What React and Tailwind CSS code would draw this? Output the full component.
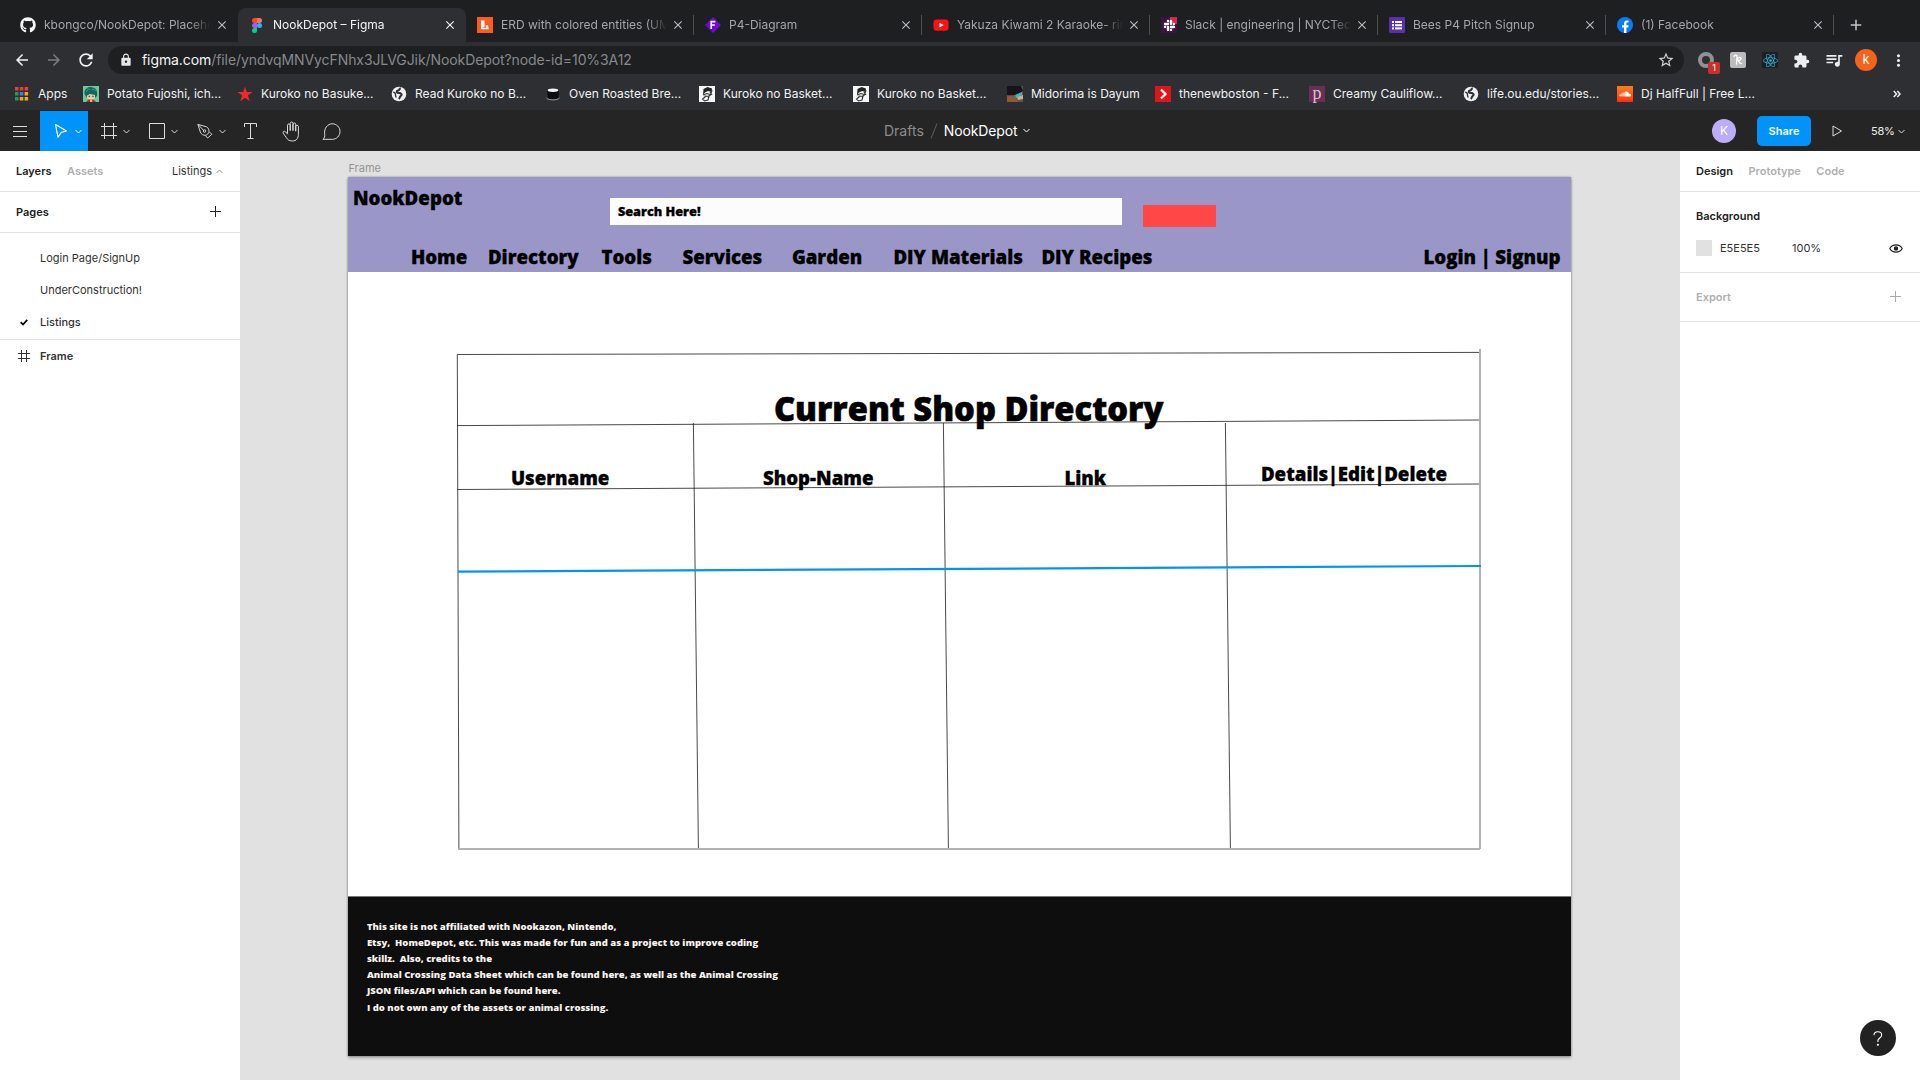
import React from "react";
import {
  MdArrowBack, MdArrowForward, MdRefresh, MdLock, MdStarBorder, MdExtension,
  MdQueueMusic, MdMoreVert, MdClose, MdAdd,
} from "react-icons/md";
import { FaGithub, FaReact, FaSoundcloud, FaSlack } from "react-icons/fa";

/* ---------- favicons ---------- */

const FigmaLogo = () => (
  <svg width="10" height="15" viewBox="0 0 10 15">
    <path d="M2.5 0H5v5H2.5a2.5 2.5 0 0 1 0-5z" fill="#f24e1e" />
    <path d="M5 0h2.5a2.5 2.5 0 0 1 0 5H5z" fill="#ff7262" />
    <path d="M2.5 5H5v5H2.5a2.5 2.5 0 0 1 0-5z" fill="#a259ff" />
    <circle cx="7.5" cy="7.5" r="2.5" fill="#1abcfe" />
    <path d="M2.5 10H5v2.5A2.5 2.5 0 1 1 2.5 10z" fill="#0acf83" />
  </svg>
);
const LucidLogo = () => (
  <svg width="16" height="16" viewBox="0 0 16 16">
    <rect width="16" height="16" fill="#fc5c1d" />
    <path d="M4 3.5h3.6v5.3l3.4-.5.8 3.9H4z" fill="#fff" />
    <path d="M5.4 10.8l3.2-2 .8 1.9z" fill="#fc5c1d" />
  </svg>
);
const DiamondLogo = () => (
  <svg width="16" height="16" viewBox="0 0 16 16">
    <path d="M8 0l8 8-8 8-8-8z" fill="#7109d6" />
    <path d="M6.2 12V4.6h4.2M6.2 8h3.6" fill="none" stroke="#fff" strokeWidth="1.6" />
  </svg>
);
const YoutubeLogo = () => (
  <svg width="16" height="16" viewBox="0 0 16 16">
    <rect x="0.5" y="2.5" width="15" height="11.3" rx="3" fill="#f11" />
    <path d="M6.5 5.7l4.2 2.4-4.2 2.4z" fill="#fff" />
  </svg>
);
const SlackTile = () => (
  <div className="relative flex size-4 items-center justify-center bg-[#3f1144]">
    <span className="absolute right-0 top-0 h-[7px] w-[7px] bg-[#d8264f]" />
    <FaSlack className="relative size-[13px] text-white" />
  </div>
);
const FormsLogo = () => (
  <svg width="16" height="16" viewBox="0 0 16 16">
    <rect width="16" height="16" rx="1.2" fill="#5b2fb0" />
    <g fill="#fff">
      <rect x="3" y="4" width="2" height="2" /><rect x="6" y="4" width="7" height="2" />
      <rect x="3" y="7.2" width="2" height="2" /><rect x="6" y="7.2" width="7" height="2" />
      <rect x="3" y="10.4" width="2" height="2" /><rect x="6" y="10.4" width="7" height="2" />
    </g>
  </svg>
);
const FacebookLogo = () => (
  <svg width="16" height="16" viewBox="0 0 16 16">
    <circle cx="8" cy="8" r="8" fill="#0a7cf5" />
    <path d="M7 16v-5.4H5V8.2h2V6.5c0-2 1.2-3.1 3-3.1.8 0 1.5.1 1.5.1v2h-.9c-1 0-1.2.6-1.2 1.2v1.5h2.2l-.4 2.4H9.4V16z" fill="#fff" />
  </svg>
);
const AppsGrid = () => (
  <svg width="16" height="16" viewBox="0 0 16 16">
    <g fill="#ea3f35"><rect x="1" y="1" width="3.500" height="3.500" /><rect x="5.800" y="1" width="3.500" height="3.500" /><rect x="10.600" y="1" width="3.500" height="3.500" /></g>
    <rect x="1" y="6" width="3.500" height="3.500" fill="#1f9d55" /><rect x="5.800" y="6" width="3.500" height="3.500" fill="#3b7fe8" /><rect x="10.600" y="6" width="3.500" height="3.500" fill="#f6a623" />
    <rect x="1" y="11" width="3.500" height="3.500" fill="#1f9d55" /><rect x="5.800" y="11" width="3.500" height="3.500" fill="#f6a623" /><rect x="10.600" y="11" width="3.500" height="3.500" fill="#f6a623" />
  </svg>
);
const AnimeFace = () => (
  <svg width="16" height="16" viewBox="0 0 16 16">
    <rect width="16" height="16" fill="#6fc79b" />
    <path d="M1.5 8C1 3 5 .5 8.500 1.200 13 1.500 15 5 14 10l-2 2H4z" fill="#14665f" />
    <path d="M3 2.500l4 1M9 3l4 1.500M3 6l2-2" stroke="#2f9a8b" />
    <path d="M4 9.500l3-1.500 5 1V12l-2 2H6l-2-2z" fill="#ecc8a8" />
    <path d="M5.500 10.300h1.600M9.200 10.300h1.600" stroke="#2c4034" />
    <path d="M3 16l2.500-2.600h5L13 16z" fill="#8a3a26" />
    <path d="M7 13.400h2.200V16H7z" fill="#e6b593" />
  </svg>
);
const RedStar = () => (
  <svg width="16" height="16" viewBox="0 0 16 16">
    <path d="M8 .8l1.800 5.300h5.700l-4.600 3.400 1.900 5.800L8 11.800l-4.800 3.500 1.900-5.800L.5 6.100h5.700z" fill="#f0282d" />
  </svg>
);
const Globe = () => (
  <svg width="16" height="16" viewBox="0 0 16 16">
    <circle cx="8" cy="8" r="7.3" fill="#eef0f2" />
    <path d="M9.800 2.200c-1.600.2-1 1.600-2.300 2-1.300.3-2 1-1.500 2.100.5 1 2.500.6 3.500 1 1.300.6 1.500 1.700.3 2.600-1 .7-1 2.200-2 3.100" fill="none" stroke="#2e2f33" strokeWidth="2" />
    <path d="M2.200 6.200c1 .3 2.600 1.300 2.300 2.600-.2 1 .6 1.400.5 2.800" fill="none" stroke="#2e2f33" strokeWidth="1.300" />
  </svg>
);
const Pot = () => (
  <svg width="16" height="16" viewBox="0 0 16 16">
    <path d="M2 4.500h12l-.7 7.500c-.2 2-10.400 2-10.600 0z" fill="#0d0d0f" />
    <ellipse cx="8" cy="4.300" rx="5.300" ry="1.700" fill="#f5f5f5" />
    <path d="M1.500 12c2 2.500 11 2.500 13 0" fill="none" stroke="#b9b9bc" strokeWidth=".8" />
  </svg>
);
const Manga = () => (
  <svg width="16" height="16" viewBox="0 0 16 16">
    <rect width="16" height="16" fill="#f6f6f6" />
    <path d="M4.500 3l4-2 4.500 1.500L12.500 6 9 5 6 6.500 4 9z" fill="#222" />
    <path d="M13 4l-1.500 5-3 2M4 9l4-1.500 3 1M6 11l-2.500 2 2 2 3.500-1 1-3.500-4-.5zM11 6l2 3" fill="none" stroke="#333" strokeWidth="1.100" />
  </svg>
);
const Midorima = () => (
  <svg width="16" height="16" viewBox="0 0 16 16">
    <rect width="16" height="16" fill="#5c5350" />
    <path d="M0 0h14l2 5-7 5-9-1z" fill="#121519" />
    <path d="M0 10l8-1 3 7H0z" fill="#8f5a3c" />
    <path d="M8 9l7-3v3l-6 3z" fill="#38b6c4" />
    <path d="M10 11l6-2v4l-5 1z" fill="#cbb37a" />
  </svg>
);
const RedChevron = () => (
  <svg width="16" height="16" viewBox="0 0 16 16">
    <rect width="16" height="16" fill="#e0141b" />
    <path d="M6 3.500l4.500 4.500L6 12.500" fill="none" stroke="#fff" strokeWidth="2.200" />
  </svg>
);
const PinchTile = () => (
  <div className="flex size-4 items-center justify-center bg-[#6b2f57] pb-[3px] font-['Liberation_Serif',serif] text-[18px] leading-none text-[#d9c5d2]">p</div>
);
const CloudTile = () => (
  <div className="flex size-4 items-center justify-center bg-linear-to-b from-[#ff7a18] to-[#ff2a10]">
    <FaSoundcloud className="size-[12px] text-white" />
  </div>
);

/* ---------- browser chrome ---------- */

const tabs = [
  { title: "kbongco/NookDepot: Placeho", icon: <FaGithub className="size-4 text-[#f5f5f5]" />, first: true },
  { title: "NookDepot – Figma", icon: <FigmaLogo />, active: true },
  { title: "ERD with colored entities (UM", icon: <LucidLogo />, sep: true },
  { title: "P4-Diagram", icon: <DiamondLogo />, sep: true },
  { title: "Yakuza Kiwami 2 Karaoke- rin", icon: <YoutubeLogo />, sep: true },
  { title: "Slack | engineering | NYCTec", icon: <SlackTile />, sep: true },
  { title: "Bees P4 Pitch Signup", icon: <FormsLogo />, sep: true },
  { title: "(1) Facebook", icon: <FacebookLogo />, sep: true },
];

function Tab({ title, icon, active, sep, first }) {
  return (
    <div
      className={
        "relative flex h-[34px] w-[228px] items-center " + (first ? "pl-[10px] " : "pl-[11px] ") +
        (active ? "rounded-t-lg bg-[#2e2f33] text-[#f2f3f4]" : "text-[#a3a6aa]")
      }
    >
      <div className="flex size-4 shrink-0 items-center justify-center">{icon}</div>
      <div className="ml-2 w-[168px] overflow-hidden whitespace-nowrap text-[12px] [mask-image:linear-gradient(to_right,black_87%,transparent_99%)]">
        {title}
      </div>
      <MdClose className={"size-[14px] " + (first ? "ml-[3px] " : "ml-[2px] ") + (active ? "text-[#f2f3f4]" : "text-[#b9bcc0]")} />
      {sep && <span className="absolute right-0 top-[7px] h-5 w-px bg-[#4b4d51]" />}
    </div>
  );
}

const bookmarks = [
  { w: "w-[69px]", t: "Apps", i: <AppsGrid /> },
  { w: "w-[154px]", t: "Potato Fujoshi, ich...", i: <AnimeFace /> },
  { w: "w-[154px]", t: "Kuroko no Basuke...", i: <RedStar /> },
  { w: "w-[154px]", t: "Read Kuroko no B...", i: <Globe /> },
  { w: "w-[154px]", t: "Oven Roasted Bre...", i: <Pot /> },
  { w: "w-[154px]", t: "Kuroko no Basket...", i: <Manga /> },
  { w: "w-[154px]", t: "Kuroko no Basket...", i: <Manga /> },
  { w: "w-[148px]", t: "Midorima is Dayum", i: <Midorima /> },
  { w: "w-[154px]", t: "thenewboston - F...", i: <RedChevron /> },
  { w: "w-[154px]", t: "Creamy Cauliflow...", i: <PinchTile /> },
  { w: "w-[154px]", t: "life.ou.edu/stories...", i: <Globe /> },
  { w: "w-[154px]", t: "Dj HalfFull | Free L...", i: <CloudTile /> },
];

function Browser() {
  return (
    <header>
      <div className="flex h-[42px] items-end bg-[#1e1f21] pl-[10px]">
        {tabs.map((t) => <Tab key={t.title} {...t} />)}
        <div className="flex h-[34px] items-center pl-[13px]">
          <MdAdd className="size-[18px] text-[#c3c6c9]" />
        </div>
      </div>
      <div className="flex h-9 items-center bg-[#2e2f33] pl-[13px]">
        <MdArrowBack className="size-[18px] text-[#f1f3f4]" />
        <MdArrowForward className="ml-[14px] size-[18px] text-[#7b7d81]" />
        <MdRefresh className="ml-[13px] size-[20px] text-[#f1f3f4]" />
        <div className="ml-[12px] flex h-7 w-[1576px] items-center rounded-full bg-[#1e1f21] pl-[11px] pr-[9px]">
          <MdLock className="size-[14px] text-[#e4e6e8]" />
          <div className="mb-[2px] ml-[9px] flex-1 whitespace-nowrap text-[14px] tracking-[-0.006em] text-[#87898d]">
            <span className="text-[#f5f6f7]">figma.com</span>/file/yndvqMNVycFNhx3JLVGJik/NookDepot?node-id=10%3A12
          </div>
          <MdStarBorder className="size-[18px] text-[#d0d2d5]" />
        </div>
        <div className="relative ml-[14px] size-4">
          <div className="size-4 rounded-full border-[4px] border-[#8f9194]" />
          <span className="absolute left-[10px] top-[10px] flex h-3 w-3 items-center justify-center rounded-[2px] bg-[#c9302c] text-[9px] text-white">1</span>
        </div>
        <div className="ml-4 flex size-4 items-center justify-center rounded-[2px] bg-[#bcbcbc]">
          <svg width="12" height="14" viewBox="0 0 12 14" fill="none" stroke="#fff" strokeWidth="1.300" strokeLinecap="round">
            <path d="M2 3.500C2.500 2 5 1.500 5 3.500L4.500 11M5 7c1-3 4-3.500 4-1.500S6.500 7.300 5.500 7.300C7.500 7.500 7 11 9.500 10.500" />
          </svg>
        </div>
        <div className="ml-4 flex size-4 items-center justify-center bg-[#1d2023]">
          <FaReact className="size-[15px] text-[#2fb5dd]" />
        </div>
        <MdExtension className="ml-[15px] size-[17px] text-[#eceef0]" />
        <MdQueueMusic className="ml-[14px] size-[20px] text-[#eceef0]" />
        <div className="ml-[11px] flex size-[22px] items-center justify-center rounded-full bg-[#f4631a] text-[13px] text-white">k</div>
        <MdMoreVert className="ml-3 size-[19px] text-[#eceef0]" />
      </div>
      <div className="flex h-8 items-center bg-[#2e2f33] pl-[14px]">
        {bookmarks.map((b, n) => (
          <div key={n} className={"flex shrink-0 items-center gap-2 " + b.w}>
            {b.i}
            <span className="whitespace-nowrap text-[12px] text-[#f1f2f3]">{b.t}</span>
          </div>
        ))}
        <svg className="ml-[122px]" width="8" height="8" viewBox="0 0 8 8" fill="none" stroke="#eceef0" strokeWidth="1.500">
          <path d="M.8 1l2.700 3L.8 7M4.300 1L7 4 4.300 7" />
        </svg>
      </div>
    </header>
  );
}

/* ---------- editor toolbar ---------- */

const Caret = ({ className = "" }) => (
  <svg width="7" height="5" viewBox="0 0 7 5" fill="none" stroke="currentColor" className={className}>
    <path d="M.5 1l3 3 3-3" />
  </svg>
);

function Tool({ children, active, caret = true }) {
  return (
    <div className={"flex h-10 items-center " + (caret ? "w-12 pl-[11px] " : "w-10 pl-[9px] ") + (active ? "bg-[#0094fb] text-white" : "text-[#dcdcdc]")}>
      <div className="flex size-5 items-center justify-center">{children}</div>
      {caret && <Caret className="ml-[4px]" />}
    </div>
  );
}

const strokeProps = { fill: "none", stroke: "currentColor" };

function Toolbar() {
  return (
    <div className="flex h-[41px] items-end bg-[#252525]">
      <div className="flex w-[884px]">
        <Tool caret={false}>
          <svg width="14" height="13" viewBox="0 0 14 13" {...strokeProps} className="ml-[2px]"><path d="M0 1.500h14M0 6.500h14M0 11.500h14" /></svg>
        </Tool>
        <Tool active>
          <svg width="14" height="16" viewBox="0 0 14 16" {...strokeProps} strokeWidth="1.200"><path d="M1.500 1.500l11 6.500-5.200 1.400-3.300 4.800z" strokeLinejoin="round" /></svg>
        </Tool>
        <Tool>
          <svg width="16" height="16" viewBox="0 0 16 16" {...strokeProps}><path d="M3.500 0v16M12.500 0v16M0 3.500h16M0 12.500h16" /></svg>
        </Tool>
        <Tool>
          <svg width="16" height="16" viewBox="0 0 16 16" {...strokeProps}><path d="M.5.5h15v15H.5z" /></svg>
        </Tool>
        <Tool>
          <svg width="16" height="16" viewBox="0 0 17 17" {...strokeProps} strokeLinejoin="round">
            <path d="M1 1.500l9 2.500c2.500 1.200 2.800 3.500 2.800 6.200l-3.300 3C6.500 13.200 4.500 12 3.500 9.500z" />
            <path d="M13.500 9.700l2.200 2.300-4.400 4-2-2.300M1 1.500l6 6.300" />
            <circle cx="8" cy="8.500" r="1.300" />
          </svg>
        </Tool>
        <Tool caret={false}>
          <svg width="14" height="16" viewBox="0 0 14 16" {...strokeProps}><path d="M.5 4V.5h12V4M6.500 .5v15M3.500 15.500h6" /></svg>
        </Tool>
        <Tool caret={false}>
          <svg width="18" height="21" viewBox="0 0 18 21" {...strokeProps} strokeLinejoin="round" strokeLinecap="round">
            <path d="M5.500 12V4.200c0-1.700 2.700-1.700 2.700 0V9.500M8.200 9V2.300c0-1.700 2.800-1.700 2.800 0V9.500M11 9V3.200c0-1.700 2.700-1.700 2.700 0V10M13.700 9.500V5.500c0-1.600 2.700-1.600 2.700 0V13.500c0 3.700-2 6.500-6 6.500-3.300 0-5-1.500-6.200-3.600L1.200 12.200c-.8-1.700 1-2.600 2.200-1.500L5.500 13" />
          </svg>
        </Tool>
        <Tool caret={false}>
          <svg width="19" height="17" viewBox="0 0 19 17" {...strokeProps} strokeLinejoin="round">
            <path d="M1 16.300c1.500-1.500 2-2.700 1.700-5C1.800 5.500 5.500.8 10.300.8c4.300 0 7.700 3.400 7.700 7.700s-3.400 7.800-7.700 7.800z" />
          </svg>
        </Tool>
      </div>
      <div className="flex h-10 flex-1 items-center whitespace-nowrap pb-px text-[14px]">
        <span className="text-[#8c8c8c]">Drafts</span>
        <svg className="ml-[6px]" width="8" height="16" viewBox="0 0 8 16" {...strokeProps}><path d="M7 .5L1 15.500" stroke="#5f5f5f" /></svg>
        <span className="ml-[6px] tracking-[-0.01em] text-white">NookDepot</span>
        <Caret className="ml-[6px] text-white" />
      </div>
      <div className="flex h-10 items-center">
        <div className="flex size-6 items-center justify-center rounded-full bg-[#bcadfb] text-[12px] text-white">K</div>
        <div className="ml-[21px] flex h-[30px] w-[54px] items-center justify-center rounded-[5px] bg-[#0094fb] text-[11px] font-semibold text-white">Share</div>
        <svg className="ml-[21px]" width="11" height="12" viewBox="0 0 11 12" {...strokeProps}><path d="M1 1l8.500 5L1 11z" stroke="#dcdcdc" /></svg>
        <span className="ml-[28px] w-[27px] text-[11px] tracking-[-0.02em] text-[#ededed]">58%</span>
        <Caret className="mr-[15px] text-[#dcdcdc]" />
      </div>
    </div>
  );
}

/* ---------- side panels ---------- */

const Plus = ({ className }) => (
  <svg width="12" height="12" viewBox="0 0 12 12" {...strokeProps} className={className}><path d="M5.500 0v11M0 5.500h11" /></svg>
);

function LeftPanel() {
  return (
    <aside className="w-60 shrink-0 bg-white text-[11px] text-[#333]">
      <div className="flex h-[41px] items-center border-b border-[#e3e3e3] pl-4 pr-[17px]">
        <span className="w-[51px] font-semibold text-[#222]">Layers</span>
        <span className="flex-1 font-semibold text-[#b0b0b0]">Assets</span>
        <span>Listings</span>
        <Caret className="ml-[4px] rotate-180 text-[#999]" />
      </div>
      <div className="flex h-[41px] items-center justify-between border-b border-[#e3e3e3] pl-4 pr-[18px]">
        <span className="font-semibold text-[#222]">Pages</span>
        <Plus className="text-[#222]" />
      </div>
      <div className="flex h-[107px] flex-col border-b border-[#e3e3e3] pt-[9px]">
        <div className="flex h-8 items-center pl-10">Login Page/SignUp</div>
        <div className="flex h-8 items-center pl-10">UnderConstruction!</div>
        <div className="flex h-8 items-center pl-5 font-medium">
          <svg width="8" height="7" viewBox="0 0 8 7" {...strokeProps} strokeWidth="1.700" className="mr-3 text-black"><path d="M.7 3.200l2.300 2.300L7.300.9" /></svg>
          Listings
        </div>
      </div>
      <div className="flex h-8 items-center pl-[18px] font-semibold">
        <svg width="12" height="12" viewBox="0 0 12 12" {...strokeProps} className="mr-[10px]"><path d="M3.500 0v12M8.500 0v12M0 3.500h12M0 8.500h12" /></svg>
        Frame
      </div>
    </aside>
  );
}

function RightPanel() {
  return (
    <aside className="relative w-60 shrink-0 bg-white text-[11px] text-[#333]">
      <div className="flex h-[41px] items-center gap-[15.500px] border-b border-[#e3e3e3] pl-4 font-semibold text-[#b0b0b0]">
        <span className="text-[#222]">Design</span>
        <span>Prototype</span>
        <span>Code</span>
      </div>
      <div className="h-[81px] border-b border-[#e3e3e3] pl-4 pr-[17px] pt-2">
        <div className="flex h-8 items-center font-semibold text-[#222]">Background</div>
        <div className="flex h-8 items-center">
          <span className="size-4 bg-[#e1e1e1]" />
          <span className="ml-2 w-[72px]">E5E5E5</span>
          <span className="flex-1">100%</span>
          <svg width="14" height="9" viewBox="0 0 14 9" {...strokeProps} strokeWidth="1.200" className="text-[#222]">
            <path d="M.8 4.500C3.500-.3 10.500-.3 13.200 4.500 10.500 9.300 3.500 9.300.8 4.500z" />
            <circle cx="7" cy="4.500" r="1.600" fill="currentColor" />
          </svg>
        </div>
      </div>
      <div className="flex h-[49px] items-center justify-between border-b border-[#e3e3e3] pl-4 pr-[18px] font-semibold text-[#b0b0b0]">
        Export
        <Plus className="text-[#aaa]" />
      </div>
      <div className="absolute bottom-6 right-6 flex size-9 items-center justify-center rounded-full bg-[#222]">
        <svg width="10" height="15" viewBox="0 0 10 15" {...strokeProps} strokeWidth="1.100" className="text-white">
          <path d="M1 4.300C1 2 2.600.8 4.800.8s3.900 1.300 3.900 3.300c0 2.800-3.800 2.900-3.800 5.600V11" />
          <circle cx="4.900" cy="13.700" r=".5" fill="currentColor" />
        </svg>
      </div>
    </aside>
  );
}

/* ---------- design canvas ---------- */

const navItems = [
  { t: "Home", c: "left-[62.500px] [font-stretch:94.5%]" },
  { t: "Directory", c: "left-[139.500px] [font-stretch:98%]" },
  { t: "Tools", c: "left-[253px] [font-stretch:99%]" },
  { t: "Services", c: "left-[334px] [font-stretch:98%]" },
  { t: "Garden", c: "left-[443.5px] [font-stretch:97%]" },
  { t: "DIY Materials", c: "left-[545px] [font-stretch:94.5%]" },
  { t: "DIY Recipes", c: "left-[693px] [font-stretch:96.5%]" },
  { t: "Login | Signup", c: "left-[1075px] [font-stretch:92.5%]" },
];
const columns = [
  { t: "Username", c: "left-[162.500px] top-[292px] [font-stretch:97%]" },
  { t: "Shop-Name", c: "left-[414.500px] top-[292px] [font-stretch:97%]" },
  { t: "Link", c: "left-[716px] top-[292px] [font-stretch:94%]" },
  { t: "Details|Edit|Delete", c: "left-[912.5px] top-[287.500px] [font-stretch:91%]" },
];

const footerLines = [
  "This site is not affiliated with Nookazon, Nintendo,",
  "Etsy,  HomeDepot, etc. This was made for fun and as a project to improve coding",
  "skillz.  Also, credits to the",
  "Animal Crossing Data Sheet which can be found here, as well as the Animal Crossing",
  "JSON files/API which can be found here.",
  "I do not own any of the assets or animal crossing.",
];

function DesignFrame() {
  return (
    <div className="relative flex h-[879px] w-[1223px] flex-col whitespace-pre bg-white font-['Open_Sans',sans-serif] text-[18.7px] font-extrabold leading-none text-black shadow-[0_0_2px_rgba(0,0,0,0.35),0_2px_3px_rgba(0,0,0,0.25)] [-webkit-text-stroke:0.3px_currentColor]">
      <div className="relative h-[95.300px] bg-[#9a96c8]">
        <span className="absolute left-[4.500px] top-[12px] [font-stretch:96%]">NookDepot</span>
        <div className="absolute left-[262px] top-[21.300px] flex h-[26.700px] w-[512px] items-center bg-[#fcfcfc] pl-[7.500px] text-[12.700px] [font-stretch:91%]">Search Here!</div>
        <div className="absolute left-[795px] top-[28.200px] h-[21.800px] w-[73px] bg-[#ff4747]" />
        {navItems.map((n) => <span key={n.t} className={"absolute top-[71.400px] " + n.c}>{n.t}</span>)}
      </div>
      <div className="flex-1" />
      <div className="h-[160px] border-t border-[#777] bg-[#0e0e0e] pl-[18.500px] pt-[21.500px] text-[9.500px] leading-[16.200px] text-[#f6f1ee] [-webkit-text-stroke:0px] [font-stretch:94.5%]">
        {footerLines.map((l) => <div key={l}>{l}</div>)}
      </div>
      <svg className="absolute inset-0" width="1223" height="879" viewBox="348 177 1223 879" fill="none" stroke="#1a1a1a" strokeWidth=".8">
        <path d="M457.300 354.500L458.900 848M457.300 354.500L1480 352.400M457.500 425.600L1480 420M457.500 489.500L1480 484" />
        <path d="M693.400 423L698.400 848M943.400 423L948.400 848M1225.400 423L1230.400 848" />
        <path d="M1480 349v500M458 849h1022" strokeWidth="2" stroke="#b2b2b2" />
        <path d="M458 571.600L1481 566" stroke="#0094fb" strokeWidth="2.200" />
      </svg>
      <span className="absolute left-[425.500px] top-[216px] text-[32.700px] [-webkit-text-stroke:0.6px_currentColor]">Current Shop Directory</span>
      {columns.map((n) => <span key={n.t} className={"absolute " + n.c}>{n.t}</span>)}
    </div>
  );
}

export default function App() {
  return (
    <div className="flex h-[1080px] w-[1920px] flex-col overflow-hidden font-['Inter',sans-serif]">
      <Browser />
      <Toolbar />
      <div className="flex min-h-0 flex-1">
        <LeftPanel />
        <main className="flex-1 overflow-hidden bg-[#e1e1e1] pl-[108.400px]">
          <div className="flex h-[26px] items-end pb-px text-[11px] text-[#949494]">Frame</div>
          <DesignFrame />
        </main>
        <RightPanel />
      </div>
    </div>
  );
}
